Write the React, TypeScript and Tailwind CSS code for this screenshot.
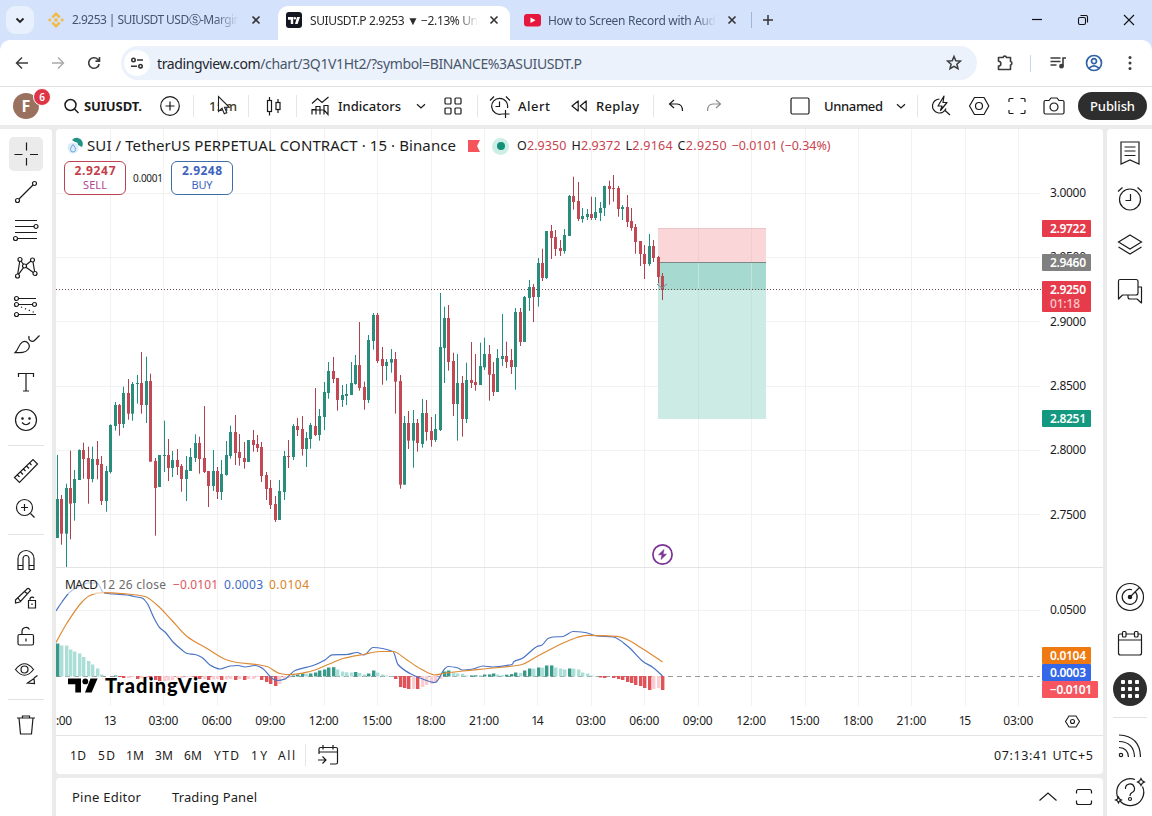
import { useLayoutEffect, useRef, useState } from "react";
import type { ReactNode } from "react";

/* ---------- helpers ---------- */

// Text that is tracked so that it fills a given width.
function Fit({ w, className = "", children }: { w: number; className?: string; children: ReactNode }) {
  const ref = useRef<HTMLSpanElement>(null);
  const [spacing, setSpacing] = useState(0);
  useLayoutEffect(() => {
    const el = ref.current;
    if (!el) return;
    const n = (el.textContent || "").length;
    const previous = el.style.letterSpacing;
    el.style.letterSpacing = "0px";
    const natural = el.getBoundingClientRect().width;
    el.style.letterSpacing = previous;
    setSpacing((w - natural) / Math.max(1, n - 1));
  }, [w]);
  return (
    <span ref={ref} className={`inline-block shrink-0 whitespace-pre ${className}`} style={{ letterSpacing: spacing, marginRight: -spacing }}>
      {children}
    </span>
  );
}

function Ico({ s = 28, sw = 1.2, className = "", children }: { s?: number; sw?: number; className?: string; children: ReactNode }) {
  return (
    <svg
      width={s}
      height={s}
      viewBox={`${-s / 2} ${-s / 2} ${s} ${s}`}
      fill="none"
      stroke="currentColor"
      strokeWidth={sw}
      className={`shrink-0 ${className}`}
    >
      {children}
    </svg>
  );
}

const Sep = ({ className = "" }: { className?: string }) => <div className={`h-[22px] w-px shrink-0 bg-[#e6e6e6] ${className}`} />;

/* ---------- chart data ---------- */

type Bar = [up: 0 | 1, high: number, top: number, bottom: number, low: number];

// Heights are thirds of a pixel below the segment's offset.
const SEGMENTS: { first: number; offset: number; bars: Bar[] }[] = [
  {
    first: -12,
    offset: 330,
    bars: [
      [1, 375, 507, 624, 624], [0, 495, 507, 611, 644], [1, 461, 474, 611, 711], [0, 362, 474, 521, 628],
      [1, 420, 447, 519, 572], [1, 358, 360, 450, 450], [0, 338, 360, 387, 446], [0, 350, 384, 447, 521],
      [1, 350, 387, 447, 457], [0, 333, 387, 405, 448], [0, 378, 402, 513, 525], [1, 408, 423, 513, 545],
      [1, 283, 285, 426, 430], [1, 216, 225, 288, 302], [0, 222, 225, 282, 317], [1, 170, 189, 282, 294],
      [0, 147, 189, 251, 269], [1, 156, 162, 251, 272], [1, 135, 159, 161, 221], [0, 66, 159, 225, 251],
      [1, 80, 153, 225, 279], [0, 131, 153, 395, 395], [0, 384, 393, 474, 617], [1, 375, 375, 471, 471],
      [1, 272, 375, 377, 426],
    ],
  },
  {
    first: 13,
    offset: 310,
    bars: [
      [0, 387, 435, 474, 513], [1, 423, 450, 474, 501], [0, 417, 450, 471, 495], [0, 462, 468, 507, 545],
      [1, 438, 480, 507, 573], [1, 414, 441, 483, 483], [1, 373, 399, 444, 456], [0, 380, 399, 447, 491],
      [0, 288, 444, 486, 489], [0, 483, 483, 528, 591], [1, 420, 483, 528, 543], [0, 471, 483, 546, 567],
      [1, 450, 492, 546, 570], [1, 393, 435, 495, 497], [1, 347, 366, 438, 446], [0, 315, 366, 429, 465],
      [0, 372, 426, 444, 467], [0, 396, 444, 456, 476], [1, 390, 390, 456, 456], [0, 360, 390, 405, 425],
      [0, 375, 402, 414, 426], [0, 396, 411, 498, 516], [0, 486, 495, 537, 570], [0, 510, 534, 585, 597],
      [0, 558, 582, 630, 636], [1, 510, 543, 630, 630], [1, 423, 438, 546, 570], [0, 390, 438, 440, 474],
      [1, 342, 348, 441, 450], [0, 324, 348, 360, 378], [0, 318, 357, 417, 437], [1, 366, 384, 417, 471],
      [1, 339, 345, 387, 416], [0, 234, 348, 375, 378], [1, 297, 318, 375, 392], [1, 216, 246, 321, 360],
      [1, 156, 183, 249, 266], [0, 141, 183, 207, 219], [0, 204, 204, 270, 302], [1, 225, 255, 270, 291],
      [1, 222, 252, 258, 285], [1, 156, 219, 255, 255], [1, 135, 165, 222, 224], [0, 36, 165, 234, 242],
      [0, 215, 231, 270, 299], [1, 75, 90, 270, 279], [1, 9, 15, 93, 119], [0, 9, 15, 153, 159],
    ],
  },
  {
    first: 61,
    offset: 170,
    bars: [
      [0, 531, 567, 588, 644], [1, 567, 576, 588, 632], [1, 537, 567, 578, 608], [0, 546, 567, 635, 731],
      [0, 615, 633, 944, 956], [1, 738, 759, 944, 944], [0, 723, 759, 812, 837], [1, 720, 759, 812, 893],
      [0, 747, 759, 819, 845], [1, 687, 729, 822, 833], [0, 690, 729, 786, 812], [0, 741, 783, 810, 830],
      [1, 732, 777, 810, 816], [1, 369, 531, 780, 783], [1, 410, 444, 534, 639], [0, 405, 444, 576, 602],
      [0, 548, 573, 702, 738], [1, 552, 639, 702, 812], [0, 618, 639, 747, 800], [1, 578, 630, 747, 759],
      [0, 516, 630, 639, 654], [0, 552, 636, 645, 662], [1, 518, 588, 645, 645], [1, 503, 552, 592, 600],
      [0, 525, 552, 614, 692], [0, 576, 612, 666, 678], [1, 537, 564, 666, 666], [1, 432, 558, 567, 588],
      [0, 515, 558, 576, 594], [0, 537, 570, 591, 612], [1, 414, 426, 591, 659], [0, 414, 426, 516, 528],
      [1, 378, 381, 516, 516], [1, 330, 351, 384, 423], [0, 342, 351, 381, 456], [1, 264, 279, 381, 410],
      [0, 236, 279, 324, 333], [1, 183, 183, 324, 327], [0, 165, 183, 204, 267], [0, 180, 201, 237, 258],
      [0, 210, 234, 243, 258], [1, 177, 195, 243, 251], [1, 75, 78, 198, 198], [0, 20, 78, 96, 119],
      [0, 36, 93, 147, 153], [1, 114, 138, 147, 158], [1, 117, 132, 141, 150], [0, 80, 132, 144, 150],
      [1, 81, 126, 144, 150], [1, 96, 114, 129, 153], [1, 47, 48, 114, 138], [0, 32, 48, 57, 104],
      [0, 15, 54, 56, 95], [0, 48, 54, 117, 140], [1, 105, 111, 117, 150], [0, 75, 111, 156, 171],
      [0, 114, 153, 174, 182], [0, 162, 171, 216, 251], [0, 213, 213, 252, 288], [0, 225, 252, 282, 327],
      [1, 192, 228, 282, 288], [0, 210, 228, 264, 276], [0, 258, 261, 321, 340], [0, 309, 318, 360, 390],
    ],
  },
];

const barX = (i: number) => Math.floor(110.6 + i * 4.4525);

const HISTOGRAM = [
  33, 31, 30.9, 27, 25, 23, 19.5, 15.5, 12, 8, 2, 0, 0, 1, -1, -2, -2, -1, -3, -2, -2, -3, -4, -5, -5, -4.5, -4, -2, -2, -1,
  -1, -2, -3, -3, -4, -3.5, -3, -4, -3.5, -3, -4, -3, -4, -3, -3, -1, -4, -6, -8, -10, -8, -4, -2, 1, 2, 3, 2.8, 3, 4,
  6, 7, 9, 9.3, 7, 5, 4.2, 4, 4.5, 3.5, 2, 3, 6, 4, 2, 1, 0.5, -3, -11, -12, -13, -12.9, -13, -11, -9, -8, -6, -3, 5, 6,
  4, 3, 2.8, 1, 1.1, 1.2, 1.1, 2, 2.1, 3, 2, 1.5, 1.8, 2.4, 4, 3.6, 6, 8, 7.8, 9, 8.8, 11, 11.1, 9, 8, 7, 8, 7.8, 7, 4, 3, 1, 0.5,
  -1.5, -2, 0, -2, -3, -4, -6, -7, -9, -10, -12, -14, -13, -12, -14, -14.1,
].slice(0, 138);

// Flat lists of x, y pairs.
const MACD_POINTS = [
  56, 611, 62, 602, 70, 592, 78, 587, 88, 583, 97, 583, 104, 593, 127, 595, 134, 596.5, 142, 598, 147, 603, 154, 618, 160, 628, 165, 632,
  173, 642, 182, 650, 187, 653.5, 195, 654.5, 202, 657.5, 210, 665, 220, 669, 230, 666, 238, 665.5, 245, 667, 255, 665.5, 262, 668,
  273, 679, 278, 680.5, 285, 679, 295, 670.5, 313, 665.5, 325, 660, 332, 654.8, 348, 654.3, 357, 652.5, 364, 655, 373, 647.5, 393, 651.5,
  398, 664.5, 410, 673.5, 420, 678, 435, 682.5, 445, 668.5, 448, 666.5, 458, 668, 462, 670, 473, 669, 483, 666, 493, 667, 512, 664.5,
  514, 661.5, 522, 658.5, 530, 652, 537, 646.5, 542, 645, 548, 638.5, 553, 637, 563, 636.5, 573, 631.5, 585, 632.5, 597, 636, 613, 637,
  628, 646.5, 643, 661.5, 653, 667.5, 662.5, 676,
];
const SIGNAL_POINTS = [
  56, 642.5, 67, 623, 82, 602, 89, 596, 97, 593.2, 103, 592.7, 127, 594, 145, 596.5, 157, 605, 172, 620.5, 187, 636.5, 207, 648.5, 227, 660,
  237, 662.5, 257, 664.5, 267, 666.5, 280, 673.5, 290, 674.7, 310, 671.5, 330, 663.7, 343, 658.5, 363, 654.5, 380, 651.5, 393, 651.5,
  407, 660, 420, 668.5, 435, 675, 443, 673.5, 463, 671, 493, 668, 520, 665, 537, 656.5, 560, 644.5, 577, 637.5, 587, 635.3, 617, 636.3,
  627, 639.5, 643, 649, 662.5, 662,
];

// Cubic path through the points with horizontal-weighted tangents.
function smooth(p: number[]) {
  const n = p.length / 2;
  const slope = (i: number) => {
    if (i === 0 || i === n - 1) return null;
    const a = (p[2 * i + 1] - p[2 * i - 1]) / (p[2 * i] - p[2 * i - 2]);
    const b = (p[2 * i + 3] - p[2 * i + 1]) / (p[2 * i + 2] - p[2 * i]);
    return a * b <= 0 ? 0 : (2 * a * b) / (a + b);
  };
  let d = `M${p[0]} ${p[1]}`;
  for (let i = 0; i < n - 1; i++) {
    const [x0, y0, x1, y1] = p.slice(2 * i, 2 * i + 4);
    const chord = (y1 - y0) / (x1 - x0);
    const h = (x1 - x0) / 3;
    d += `C${x0 + h} ${y0 + h * (slope(i) ?? chord)} ${x1 - h} ${y1 - h * (slope(i + 1) ?? chord)} ${x1} ${y1}`;
  }
  return d;
}

const TIMES = ["13", "03:00", "06:00", "09:00", "12:00", "15:00", "18:00", "21:00", "14", "03:00", "06:00", "09:00", "12:00", "15:00", "18:00", "21:00", "15", "03:00"];
const PRICES: [string, number][] = [["3.0000", 193], ["2.9500", 257], ["2.9000", 321.5], ["2.8500", 385.5], ["2.8000", 450], ["2.7500", 514.5], ["0.0500", 609.5]];
const GRID_Y = [193, 257, 321, 386, 450, 514, 610];

function PriceTag({ y, h = 17, w = 49, fill, label, sub, tw = 36 }: { y: number; h?: number; w?: number; fill: string; label: string; sub?: string; tw?: number }) {
  return (
    <g>
      <rect x={1042} y={y} width={w} height={h} rx={1} fill={fill} />
      <text x={1050} y={y + 13} textLength={tw} fill="#fff" fontWeight={600}>{label}</text>
      {sub && <text x={1050} y={y + 27} textLength={30} fill="#fcc9cd" fontWeight={500}>{sub}</text>}
    </g>
  );
}

function Chart() {
  return (
    <svg width={1047} height={606} viewBox="56 129 1047 606" className="block" fontFamily="'Noto Sans', sans-serif" fontSize={12}>
      <g fill="#f2f2f2">
        {TIMES.map((_, i) => <rect key={i} x={Math.round(110 + i * 53.43)} y={129} width={1} height={577} />)}
        {GRID_Y.map((y) => <rect key={y} x={56} y={y} width={984} height={1} />)}
      </g>
      <rect x={56} y={567} width={1047} height={1} fill="#e4e4e4" />

      {/* short position */}
      <rect x={658} y={228} width={108} height={35} fill="#fbd6d9" />
      <rect x={658} y={262} width={108} height={28} fill="#a6d9cf" />
      <rect x={658} y={290} width={108} height={129} fill="#cdebe5" />
      <path d="M698.500 228V262M751.500 228V262" stroke="#f2cdd0" />
      <path d="M698.500 263V419M751.500 263V419" stroke="#c3e4de" />
      <rect x={658} y={228} width={108} height={1} fill="#e9c5c8" />
      <rect x={658} y={262} width={108} height={1} fill="#7c8886" />

      {SEGMENTS.map((seg) =>
        seg.bars.map(([up, high, top, bottom, low], k) => {
          const x = barX(seg.first + k);
          const y = (v: number) => seg.offset + v / 3;
          return (
            <g key={seg.first + k}>
              <rect x={x} y={y(high)} width={1} height={(low - high) / 3} fill={up ? "#1f8f80" : "#ac424d"} />
              <rect x={x - 1} y={y(top)} width={3} height={Math.max(1, (bottom - top) / 3)} fill={up ? "#2a8c7b" : "#c24954"} />
            </g>
          );
        })
      )}
      <path d="M56 289.500H1042" stroke="#6b4a4e" strokeDasharray="1 2" />
      <path d="M657 284l5 4 5-4" fill="none" stroke="#7d8a88" />

      {/* MACD */}
      <path d="M56 676.500H1040" stroke="#9a9a9a" strokeDasharray="5 4" />
      {HISTOGRAM.map((v, k) => {
        const rising = k > 0 && Math.abs(v) > Math.abs(HISTOGRAM[k - 1]);
        const dark = rising || k === 0 || v * HISTOGRAM[k - 1] < 0;
        return (
          k < 137 && (
            <rect
              key={k}
              x={barX(k - 12) - 1}
              y={v > 0 ? 676.5 - v : 676}
              width={3.4}
              height={Math.abs(v)}
              fill={v > 0 ? (dark ? "#36998a" : "#abded7") : dark ? "#e05358" : "#facdd3"}
            />
          )
        );
      })}
      <path d={smooth(MACD_POINTS)} fill="none" stroke="#4a73c4" strokeWidth={1.2} strokeLinejoin="round" />
      <path d={smooth(SIGNAL_POINTS)} fill="none" stroke="#dd8a35" strokeWidth={1.2} strokeLinejoin="round" />
      <rect x={64} y={577} width={40} height={17} fill="#fff" opacity={0.6} />

      <g stroke="#7b3294" fill="none" strokeWidth={1.7}>
        <circle cx={662.5} cy={554.5} r={9.6} fill="#fff" />
        <path d="M664 549.500 658.500 554.800H662L661 559.500 666.500 554.200H663Z" fill="#7b3294" strokeWidth={0.6} />
      </g>

      {/* scales */}
      <g fill="#1c1c1c">
        {PRICES.map(([p, y]) => <text key={p} x={1050} y={y + 4.3} textLength={36}>{p}</text>)}
        {TIMES.map((t, i) => (
          <text key={i} x={110 + i * 53.43} y={725} textAnchor="middle" textLength={t.length > 2 ? 30 : 12.5}>{t}</text>
        ))}
        <text x={56} y={725} textLength={16}>:00</text>
      </g>
      <PriceTag y={220} fill="#e53b4a" label="2.9722" />
      <PriceTag y={254} fill="#808080" label="2.9460" />
      <PriceTag y={281} h={31} fill="#e53b4a" label="2.9250" sub="01:18" />
      <PriceTag y={410} fill="#149980" label="2.8251" />
      <PriceTag y={647} fill="#ee7a11" label="0.0104" />
      <PriceTag y={664} fill="#3568e8" label="0.0003" />
      <PriceTag y={681} w={56} fill="#f7565f" label="−0.0101" tw={42} />
      <g stroke="#1c1c1c" fill="none" strokeWidth={1.1}>
        <path d="M1069 716h7l3.500 5.500-3.500 5.500h-7l-3.500-5.500Z" />
        <circle cx={1072.5} cy={721.5} r={2} />
      </g>

      {/* TradingView mark */}
      <g fill="#000">
        <path d="M68 678.500H81V692.500H75.300V684.200H68ZM90.500 678.500H97.600L91.600 692.500H85Z" />
        <circle cx={85.3} cy={681.4} r={2.9} />
      </g>
    </svg>
  );
}

/* ---------- browser chrome ---------- */

const CloseX = () => <Ico s={12} sw={1.6} className="text-[#333]"><path d="M-3.500-3.500l7 7M3.500-3.500l-7 7" /></Ico>;

function TabStrip() {
  return (
    <div className="flex h-[40px] bg-[#d5e2fc] text-[12px] leading-[40px] text-[#44546f]">
      <div className="ml-[6px] mt-[6px] flex size-[28px] items-center justify-center rounded-[9px] bg-[#e8effd] text-[#222]">
        <Ico s={12} sw={1.8}><path d="M-3.500-1.500L0 2l3.500-3.500" /></Ico>
      </div>
      <div className="ml-[14px] flex w-[219px] items-center">
        <Ico s={16} className="text-[#f0bb4c]">
          <g fill="currentColor" stroke="none">
            <path d="M0-8l4.600 4.600-1.800 1.800L0-4.400l-2.800 2.800-1.800-1.800ZM0 8l4.600-4.600-1.800-1.800L0 4.400l-2.800-2.800-1.800 1.800ZM0-2.200l2.200 2.200-2.200 2.200-2.200-2.200ZM-6.200-1.900l1.900 1.900-1.900 1.900L-8.100 0ZM6.200-1.900L8.100 0 6.200 1.900 4.300 0Z" />
          </g>
        </Ico>
        <div className="ml-[8px] h-[40px] w-[167px] overflow-hidden [mask-image:linear-gradient(to_right,black_85%,transparent)]">
          <Fit w={169}>2.9253 | SUIUSDT USDⓈ-Margin</Fit>
        </div>
        <div className="ml-[11px]"><CloseX /></div>
      </div>
      <div className="ml-[11px] mt-[6px] flex h-[34px] w-[232px] items-center rounded-t-[10px] bg-white pb-[6px] text-[#2b2b2b]">
        <div className="ml-[8px] flex size-[16px] items-center justify-center rounded-[3px] bg-[#131722] text-white">
          <svg width="12" height="7" viewBox="0 0 12 7" fill="currentColor"><path d="M0 0h5.200v7H2.800V2.700H0ZM9 0h3L9.600 7H7ZM6.800 0a1.300 1.300 0 1 1 0 2.600a1.300 1.300 0 1 1 0-2.600Z" /></svg>
        </div>
        <div className="ml-[8px] h-[28px] w-[168px] overflow-hidden leading-[29px] [mask-image:linear-gradient(to_right,black_88%,transparent)]">
          <Fit w={168}>SUIUSDT.P 2.9253 ▼ −2.13% Un</Fit>
        </div>
        <div className="ml-[10px]"><CloseX /></div>
      </div>
      <div className="ml-[14px] flex w-[220px] items-center">
        <svg width="17" height="13" viewBox="0 0 17 13"><rect width="17" height="12.500" rx="3" fill="#e6173d" /><path d="M6.500 3.500v5.500l5-2.750z" fill="#fff" /></svg>
        <div className="ml-[7px] h-[40px] w-[168px] overflow-hidden leading-[41px] [mask-image:linear-gradient(to_right,black_88%,transparent)]">
          <Fit w={168}>How to Screen Record with Aud</Fit>
        </div>
        <div className="ml-[10px]"><CloseX /></div>
      </div>
      <div className="ml-[7px] mt-[12px] h-[16px] w-px bg-[#9fb6dc]" />
      <div className="ml-[9px] flex items-center text-[#333]"><Ico s={14} sw={1.5}><path d="M-5 0h10M0-5v10" /></Ico></div>
      <div className="ml-auto flex items-center gap-[32px] pr-[16px] text-[#111]">
        <Ico s={14}><path d="M-5-0.500H5" /></Ico>
        <Ico s={14} sw={1.1}><rect x={-4.5} y={-2.5} width={7} height={7} rx={1.5} /><path d="M-2.500-4.500H3Q4.500-4.500 4.500-3V2.500" /></Ico>
        <Ico s={14} sw={1.1}><path d="M-5-5L5 5M5-5L-5 5" /></Ico>
      </div>
    </div>
  );
}

function NavBar() {
  return (
    <div className="h-[47px] bg-[#d5e2fc]">
      <div className="flex h-[47px] items-center rounded-t-[10px] border-b border-[#dfe1e5] bg-white text-[#3c3c3c]">
        <Ico s={16} sw={1.5} className="ml-[14px]"><path d="M6 0H-5.200M0-5.500L-5.500 0L0 5.500" /></Ico>
        <Ico s={16} sw={1.4} className="ml-[20px] text-[#a9a9a9]"><path d="M-6 0H5.200M0-5.500L5.500 0L0 5.500" /></Ico>
        <Ico s={16} sw={1.6} className="ml-[20px]"><path d="M5.200 1A5.300 5.300 0 1 1 3.800-3.700L5.300-2.200M5.500-6V-1.900H1.500" /></Ico>
        <div className="ml-[19px] flex h-[34px] w-[856px] items-center rounded-full bg-[#ecf2fb]">
          <div className="ml-[3px] flex size-[26px] items-center justify-center rounded-full bg-white text-[#333]">
            <Ico s={16} sw={1.6}><circle cx={-3.5} cy={-3} r={1.7} /><path d="M0-3H6M-6 3.200H0" /><circle cx={3.5} cy={3.2} r={1.7} /></Ico>
          </div>
          <Fit w={425} className="ml-[7px] text-[14px] text-[#49576b]"><span className="text-[#23272e]">tradingview.com</span>/chart/3Q1V1Ht2/?symbol=BINANCE%3ASUIUSDT.P</Fit>
          <Ico s={18} sw={1.5} className="ml-auto mr-[14px]"><path d="M0-6.500L1.800-2.300 6.400-1.900 2.900 1.200 4 5.700 0 3.300-4 5.700-2.900 1.200-6.400-1.900-1.800-2.300Z" /></Ico>
        </div>
        <Ico s={20} sw={1.6} className="ml-[18px]"><path d="M-6.500-5.500H-2A1.800 1.800 0 0 1 1.500-5.500H5.500V-1.500A1.800 1.800 0 0 1 5.500 2V6.500H-6.500V3A2 2 0 0 0-6.500-1.700Z" strokeLinejoin="round" /></Ico>
        <div className="ml-[15px] h-[17px] w-px bg-[#c4d7f5]" />
        <Ico s={18} sw={1.6} className="ml-[18px]"><path d="M-7.500-5H2.500M-7.500-1.500H2.500M-7.500 2H-1.500M5 3V-5H8" /><circle cx={3.5} cy={3.2} r={1.6} fill="currentColor" /></Ico>
        <Ico s={18} sw={1.7} className="ml-[18px] text-[#2f62a8]"><circle r={7.5} /><circle cy={-1.8} r={2.5} /><path d="M-5 5.200Q0 0.500 5 5.200" /></Ico>
        <Ico s={18} className="ml-[18px]"><g fill="currentColor" stroke="none"><circle cy={-5.5} r={1.5} /><circle r={1.5} /><circle cy={5.5} r={1.5} /></g></Ico>
      </div>
    </div>
  );
}

/* ---------- TradingView toolbars ---------- */

const Chevron = ({ className = "" }: { className?: string }) => <Ico s={10} className={className}><path d="M-4-1.800L0 2l4-3.800" /></Ico>;

function TopToolbar() {
  return (
    <div className="relative flex h-[38px] items-center bg-white text-[13px] font-medium text-[#1a1a1a]">
      <div className="relative ml-[13px] flex size-[26px] shrink-0 items-center justify-center rounded-full bg-[#9a705e] text-[16px] font-bold text-white">
        F
        <div className="absolute -top-[5px] left-[20px] flex size-[18px] items-center justify-center rounded-full border border-white bg-[#dc3545] text-[10px] font-semibold">6</div>
      </div>
      <Ico s={18} sw={1.5} className="ml-[23px]"><circle cx={-0.5} cy={-1} r={5.5} /><path d="M3.500 3L7.500 7" /></Ico>
      <Fit w={58} className="ml-[4px] pt-[2px] font-bold">SUIUSDT.</Fit>
      <Ico s={22} className="ml-[17px]"><circle r={9.3} /><path d="M-4.500 0h9M0-4.500v9" /></Ico>
      <Sep className="ml-[12px]" />
      <Fit w={28} className="ml-[15px] pt-[2px] text-[#3d3a20]">15m</Fit>
      <Sep className="ml-[11px]" />
      <Ico s={22} className="ml-[13px]"><rect x={-5.5} y={-5.5} width={4} height={11} /><path d="M-3.500-9V-5.500M-3.500 5.500V9.500" /><rect x={3} y={-3.5} width={4} height={7} /><path d="M5-7V-3.500M5 3.500V7" /></Ico>
      <Sep className="ml-[12px]" />
      <Ico s={20} className="ml-[13px]"><path d="M-8-2.500L-2.500-7.500 2-3.500 8.500-9M-8 8.500V3.500H-4V8.500M-4 3.500V0.500H0V8.500M0 4H4V8.500M4 4V-0.500H8V8.500ZH-8.500" /></Ico>
      <Fit w={63} className="ml-[8px] pt-[2px]">Indicators</Fit>
      <Chevron className="ml-[15px]" />
      <Ico s={20} className="ml-[17px]"><rect x={-8} y={-8} width={6} height={6} rx={1} /><rect x={2} y={-8} width={6} height={6} rx={1} /><rect x={-8} y={2} width={6} height={6} rx={1} /><rect x={2} y={2} width={6} height={6} rx={1} /></Ico>
      <Sep className="ml-[14px]" />
      <Ico s={24} className="ml-[10px]"><path d="M2 8A8 8 0 1 1 7.500 2M-0.500-4.500V0.500H-4.500M-10-5.500L-6-9.500M6-9.500L10-5.500M5.500 4V12M1.500 8H9.500" /></Ico>
      <Fit w={32} className="ml-[6px] pt-[2px]">Alert</Fit>
      <Ico s={18} className="ml-[20px]"><path d="M-0.800-5V5L-7 0ZM7.200-5V5L1.200 0Z" strokeLinejoin="round" /></Ico>
      <Fit w={43} className="ml-[8px] pt-[2px]">Replay</Fit>
      <Sep className="ml-[14px]" />
      <Ico s={18} className="ml-[13px]"><path d="M-2-6L-6.500-2-2 2M-6.500-2H1Q6.500-2 6.500 5" /></Ico>
      <Ico s={18} className="ml-[20px] text-[#8c8c8c]"><path d="M2-6L6.500-2 2 2M6.500-2H-1Q-6.500-2-6.500 5" /></Ico>
      <Ico s={22} className="ml-[66px]"><rect x={-9} y={-8} width={18} height={16} rx={1.5} /></Ico>
      <Fit w={59} className="ml-[13px] pt-[2px]">Unnamed</Fit>
      <Chevron className="ml-[13px]" />
      <Sep className="ml-[11px]" />
      <Ico s={24} className="ml-[11px]"><path d="M-1.500-7A7 7 0 1 0 5 2.500M3.500 4L9 9M3-10L-3 0H1L-0.500 4.500 6-3.500H2Z" strokeLinejoin="round" /></Ico>
      <Ico s={24} className="ml-[14px]"><path d="M-4.500-8.500H5L9.800 0 5 8.500H-4.500L-9.500 0Z" strokeLinejoin="round" /><circle r={3.5} /></Ico>
      <Ico s={20} className="ml-[16px]"><path d="M-8-4V-6.500Q-8-7.500-7-7.500H-3.500M3.500-7.500H7Q8-7.500 8-6.500V-4M8 4V6.500Q8 7.500 7 7.500H3.500M-3.500 7.500H-7Q-8 7.500-8 6.500V4" /></Ico>
      <Ico s={24} className="ml-[15px]"><path d="M-8.500-5.500H-5L-3-8H3L5-5.500H8.500Q10-5.500 10-4V6.500Q10 8 8.500 8H-8.500Q-10 8-10 6.500V-4Q-10-5.500-8.500-5.500Z" /><circle cy={1} r={4} /></Ico>
      <div className="ml-[12px] flex h-[28px] w-[69px] shrink-0 items-center justify-center rounded-full bg-[#2e2e2e] text-white">
        <Fit w={45} className="pt-px">Publish</Fit>
      </div>
      <svg className="absolute left-[217px] top-[8px]" width="14" height="21" viewBox="0 0 14 21"><path d="M1.500 1.500V16.500L5 13.200 7.300 18.700 9.800 17.600 7.500 12.300H12.300Z" fill="#fff" stroke="#222" strokeWidth="1.100" /></svg>
    </div>
  );
}

const Cell = ({ h = "h-[38px]", children }: { h?: string; children: ReactNode }) => (
  <div className={`flex w-full shrink-0 items-center justify-center ${h}`}>{children}</div>
);

function LeftToolbar() {
  return (
    <div className="flex w-[52px] flex-col rounded-tr-[4px] bg-white pt-[6px] text-[#1c1c1c]">
      <Cell>
        <div className="flex h-[34px] w-[34px] items-center justify-center rounded-[5px] bg-[#ebebeb]">
          <Ico><path d="M0.500-11.500V-3.500M0.500 4V11.500M-11.500 0.500H-3.500M4 0.500H12" /></Ico>
        </div>
      </Cell>
      <Cell><Ico><circle cx={-8.5} cy={8.5} r={2} /><circle cx={8.5} cy={-8.5} r={2} /><path d="M-7 7L7-7" /></Ico></Cell>
      <Cell><Ico><path d="M-11-9.500H11M-11-3.500H8M-11 2.500H11M-8.500 8.500H11" /><circle cx={10} cy={-3.5} r={2} /><circle cx={-10.5} cy={8.5} r={2} /></Ico></Cell>
      <Cell><Ico><circle cx={-6} cy={-8.5} r={2} /><circle cx={6.5} cy={-8} r={2} /><circle cx={-1.5} cy={-2} r={2} /><circle cx={-8.5} cy={8} r={2} /><circle cx={9} cy={5.5} r={2} /><path d="M-6.300-6.500L-8.300 6M-5-7L-2.500-3.700M0-3L5-7M7-6L8.600 3.500M0-0.800L7.300 4.500M-2.500-0.300L-7.500 6.300" /></Ico></Cell>
      <Cell><Ico><circle cx={-9.5} cy={-7.5} r={2} /><circle cx={-9.5} cy={-1.5} r={2} /><circle cx={8.5} cy={-1.5} r={2} /><circle cx={-9.5} cy={8.5} r={2} /><path d="M-7.500-7.500H10M-7.500-1.500H6.500M-7.500 8.500H10" /><path d="M-5 1L8.500 6.500" strokeDasharray="1.200 3" /></Ico></Cell>
      <Cell><Ico><path d="M-11 8.700C-7 5-7.500 0-3.500-2 1-4 5.500 1 2 5.500-0.500 8.700-5 8.700-11 8.700ZM3-8C2-3.500 6-1 9-4L13.500-8.500" /></Ico></Cell>
      <Cell><Ico><path d="M-7.500-5V-8.500H7.500V-5M0-8.500V9M-3 9H3" /></Ico></Cell>
      <Cell><Ico><circle r={10.5} /><path d="M-4 2.500Q0 7 4 2.500" /><circle cx={-3.5} cy={-1.5} r={0.7} fill="currentColor" /><circle cx={3.5} cy={-1.5} r={0.7} fill="currentColor" /></Ico></Cell>
      <Cell h="h-[13px]"><div className="h-px w-[36px] bg-[#e2e2e2]" /></Cell>
      <Cell><Ico><path d="M-11.500 6.500L7-11.500 11.500-7-6.500 11.500ZM-8.500 4L-6.500 6M-5.500 1L-3 3.500M-2.500-2L-0.500 0M0.500-5L3-2.500M3.500-8L5.500-6" /></Ico></Cell>
      <Cell h="h-[37px]"><Ico><circle cx={-1.5} cy={-1.5} r={8} /><path d="M4.500 4.500L8.500 8.500M-5-1.500H2M-1.500-5V2" /></Ico></Cell>
      <Cell h="h-[14px]"><div className="h-px w-[36px] bg-[#e2e2e2]" /></Cell>
      <Cell><Ico><path d="M-8 9.500V-1.500A8 8 0 0 1 8-1.500V9.500H3V-1.500A3 3 0 0 0-3-1.500V9.500ZM-8 5.500H-3M3 5.500H8" /></Ico></Cell>
      <Cell><Ico><path d="M-10.500 2L1.500-9.500Q3-10 4.500-7.500L-6 4-10.500 5ZM-8 0L-5.500 3.500M-1.500-6.500L1.500-4.200M2.500 2.500H9.500V10H2.500ZM4 0V2.500M4 1A2.200 2.200 0 0 1 8 0M6 5.500V7" /></Ico></Cell>
      <Cell><Ico><rect x={-8} y={-1.5} width={15.5} height={10.5} rx={1.5} /><path d="M-4-1.500V-5A4 4 0 0 1 3.500-6.500M0 2.500V5.500" /></Ico></Cell>
      <Cell><Ico><path d="M-10.500-4.500Q-1.500-16 7.500-4.500Q-1.500 7-10.500-4.500ZM1.500 9L8 4.500 8.500 9.500ZM8 4L11.500 1.500" /><circle cx={-1.5} cy={-4.5} r={3.5} /></Ico></Cell>
      <Cell h="h-[13px]"><div className="h-px w-[36px] bg-[#e2e2e2]" /></Cell>
      <Cell><Ico><path d="M-9-7H9M-3.500-7V-9H3.500V-7M-7-7L-5.500 9H5.500L7-7" /></Ico></Cell>
    </div>
  );
}

function RightToolbar() {
  return (
    <div className="flex w-[45px] shrink-0 flex-col rounded-tl-[4px] bg-white pt-px text-[#1c1c1c]">
      <Cell h="h-[46px]"><Ico><path d="M-9-11H9V11L0 7-9 11ZM-5.500-6H5.500M-5.500-2H5.500M-5.500 2.500H5.500" /></Ico></Cell>
      <Cell h="h-[45px]"><Ico><circle cy={0.5} r={10.5} /><path d="M0.500-5V1.500H-4.500M-12-7.500L-7.500-11.500M7.500-11.500L12-7.500" /></Ico></Cell>
      <Cell h="h-[46px]"><Ico><path d="M0-9L11.500-2 0 5-11.500-2ZM-11.500 3L0 10 11.500 3" /></Ico></Cell>
      <Cell h="h-[47px]"><Ico><path d="M-10-11.500H6Q8-11.500 8-9.500V2Q8 4 6 4H-7.500L-11.500 8V-10Q-11.500-11.500-10-11.500ZM8-4H11.500V12L7 8H0Q-2 8-2 6V4" strokeLinejoin="round" /></Ico></Cell>
      <div className="h-[260px] shrink-0" />
      <Cell h="h-[46px]"><Ico s={30}><circle r={13.5} /><path d="M5.500-4.800A7.500 7.500 0 1 1 2-7.200M0 0L9.500-9.500" /><circle r={1.7} fill="currentColor" /></Ico></Cell>
      <Cell h="h-[46px]"><Ico><path d="M-7.500-9H-10Q-11.500-9-11.500-7.500V10Q-11.500 12-9.500 12H9.500Q11.500 12 11.500 10V-7.500Q11.500-9 10-9H8M-4-9H4.500M-11.500-3H11.500" /><rect x={-7.5} y={-11.5} width={3.5} height={5.5} rx={1} /><rect x={4.5} y={-11.5} width={3.5} height={5.5} rx={1} /></Ico></Cell>
      <Cell h="h-[46px]">
        <div className="grid size-[34px] grid-cols-[repeat(3,4px)] place-content-center gap-[3px] rounded-full bg-[#2e2e2e]">
          {Array.from({ length: 9 }, (_, i) => <div key={i} className="size-[4px] rounded-[1px] bg-white" />)}
        </div>
      </Cell>
      <Cell h="h-[10px]"><div className="h-px w-[34px] bg-[#e2e2e2]" /></Cell>
      <Cell h="h-[47px]"><Ico><circle cx={-9} cy={9} r={1.7} /><path d="M-11 1.500Q-2 2-1.500 11M-11-4.500Q4-4 4.500 11M-11-11Q10-10 10.500 11" /></Ico></Cell>
      <Cell h="h-[46px]"><Ico s={34}><path d="M5-12.500A13.500 13.500 0 1 0 12.500-5.500M-4.500-3A4.500 4.500 0 1 1 2 0.500Q0 1.500 0 4M11-13.500L12.300-11.300 14.500-10 12.300-8.700 11-6.500 9.700-8.700 7.500-10 9.700-11.300Z" /><circle cy={7} r={1.5} /><path d="M-11.500 5L-10.500 7-8.500 8-10.500 9-11.500 11-12.500 9-14.500 8-12.500 7Z" fill="#fff" /></Ico></Cell>
    </div>
  );
}

function Legend() {
  return (
    <div className="absolute left-[11px] top-[7px] flex h-[20px] items-center text-[#1c1c1c]">
      <svg width="18" height="18" viewBox="0 0 18 18">
        <path d="M5 3Q9-1 14 2.500Q17 6 15 10L11 8Q11 5 8 5Z" fill="#1f9383" />
        <circle cx="6" cy="11" r="5.500" fill="#dcebf8" />
        <path d="M6 7.500Q9 11 8.500 12.500A2.500 2.500 0 0 1 3.500 12.500Q3.500 10.500 6 7.500Z" fill="none" stroke="#6fa8dc" />
      </svg>
      <Fit w={369} className="ml-[2px] pb-[2px] text-[15px]">SUI / TetherUS PERPETUAL CONTRACT · 15 · Binance</Fit>
      <svg className="ml-[12px]" width="12" height="12" viewBox="0 0 12 12"><path d="M0 0H12L9 6L12 12H0Z" fill="#f5545a" /></svg>
      <div className="ml-[12px] flex size-[17px] items-center justify-center rounded-full bg-[#cdeee6]"><div className="size-[8px] rounded-full bg-[#12907a]" /></div>
      <div className="ml-[8px] flex gap-[5px] text-[12.5px] text-[#c8444e]">
        <Fit w={49.5}><span className="text-[#1c1c1c]">O</span>2.9350</Fit>
        <Fit w={49}><span className="text-[#1c1c1c]">H</span>2.9372</Fit>
        <Fit w={47}><span className="text-[#1c1c1c]">L</span>2.9164</Fit>
        <Fit w={49}><span className="text-[#1c1c1c]">C</span>2.9250</Fit>
        <Fit w={99}>−0.0101 (−0.34%)</Fit>
      </div>
    </div>
  );
}

const RANGES: [string, number, string][] = [
  ["1D", 16, "ml-[70px]"], ["5D", 17, "ml-[12px]"], ["1M", 18, "ml-[11px]"], ["3M", 18, "ml-[11px]"],
  ["6M", 18, "ml-[11px]"], ["YTD", 25, "ml-[12px]"], ["1Y", 16, "ml-[12px]"], ["All", 17, "ml-[11px]"],
];

function ChartPanel() {
  return (
    <div className="relative h-[645px] overflow-hidden rounded-[4px] bg-white">
      <Chart />
      <Legend />
      <div className="absolute left-[8px] top-[32px] flex items-center">
        <div className="flex h-[34px] w-[62px] flex-col items-center justify-center rounded-[6px] border border-[#bb4450] bg-white leading-[14px]">
          <Fit w={41} className="text-[12px] font-bold text-[#c43f4b]">2.9247</Fit>
          <Fit w={24} className="text-[11px] text-[#b0479a]">SELL</Fit>
        </div>
        <Fit w={30} className="ml-[7px] text-[10px] text-[#1c1c1c]">0.0001</Fit>
        <div className="ml-[8px] flex h-[34px] w-[62px] flex-col items-center justify-center rounded-[6px] border border-[#3d6ca8] bg-white leading-[14px]">
          <Fit w={40} className="text-[12px] font-bold text-[#3d63bd]">2.9248</Fit>
          <Fit w={21} className="text-[11px] text-[#3d63bd]">BUY</Fit>
        </div>
      </div>
      <div className="absolute left-[9px] top-[447px] flex text-[12px] leading-[17px]">
        <Fit w={33} className="text-[#1c1c1c]">MACD</Fit>
        <Fit w={65} className="ml-[3px] text-[#6d6d6d]">12 26 close</Fit>
        <Fit w={45} className="ml-[7px] text-[#e0575e]">−0.0101</Fit>
        <Fit w={39} className="ml-[6px] text-[#3d6bc4]">0.0003</Fit>
        <Fit w={40} className="ml-[6px] text-[#d98324]">0.0104</Fit>
      </div>
      <Fit w={122} className="absolute left-[49px] top-[543px] font-[Lato] text-[20px] font-black leading-[26px] text-black">TradingView</Fit>
      <div className="flex h-[39px] items-center border-t border-[#e4e4e4] text-[12px] text-[#1c1c1c]">
        <div className="-ml-[56px] flex items-center pt-[2px]">
          {RANGES.map(([label, w, margin]) => <Fit key={label} w={w} className={margin}>{label}</Fit>)}
        </div>
        <Sep className="ml-[10px]" />
        <Ico s={24} className="ml-[10px]"><path d="M-9-1V-6Q-9-7.500-7.500-7.500H8Q9.500-7.500 9.500-6V7.500Q9.500 9 8 9H2M-9-3H9.500M-5-10V-5.500M5-10V-5.500M-10 5H-2.500M-5.500 1.500L-2 5-5.500 8.500" /></Ico>
        <div className="ml-auto mr-[10px] flex pt-[2px] text-[12.5px]"><Fit w={99}>07:13:41 UTC+5</Fit></div>
      </div>
    </div>
  );
}

function BottomPanel() {
  return (
    <div className="mt-[4px] flex h-[38px] items-center rounded-t-[4px] bg-white text-[13px] text-[#1c1c1c]">
      <Fit w={69} className="ml-[16px] pt-[2px]">Pine Editor</Fit>
      <Fit w={85} className="ml-[31px] pt-[2px]">Trading Panel</Fit>
      <Ico s={20} className="ml-auto"><path d="M-8.500 3.500L0-4 8.500 3.500" /></Ico>
      <Ico s={20} className="ml-[16px] mr-[9px]"><path d="M-7.500-3.500V-5.500Q-7.500-7.500-5.500-7.500H5.500Q7.500-7.500 7.500-5.500V-3.500M7.500 3.500V5.500Q7.500 7.500 5.500 7.500H-5.500Q-7.500 7.500-7.500 5.500V3.500" /></Ico>
    </div>
  );
}

export default function App() {
  return (
    <div className="h-[816px] w-[1152px] overflow-hidden bg-[#ebebeb] font-['Noto_Sans',sans-serif]">
      <TabStrip />
      <NavBar />
      <TopToolbar />
      <div className="mt-[4px] flex h-[687px] justify-between">
        <LeftToolbar />
        <div className="w-[1047px]">
          <ChartPanel />
          <BottomPanel />
        </div>
        <RightToolbar />
      </div>
    </div>
  );
}
